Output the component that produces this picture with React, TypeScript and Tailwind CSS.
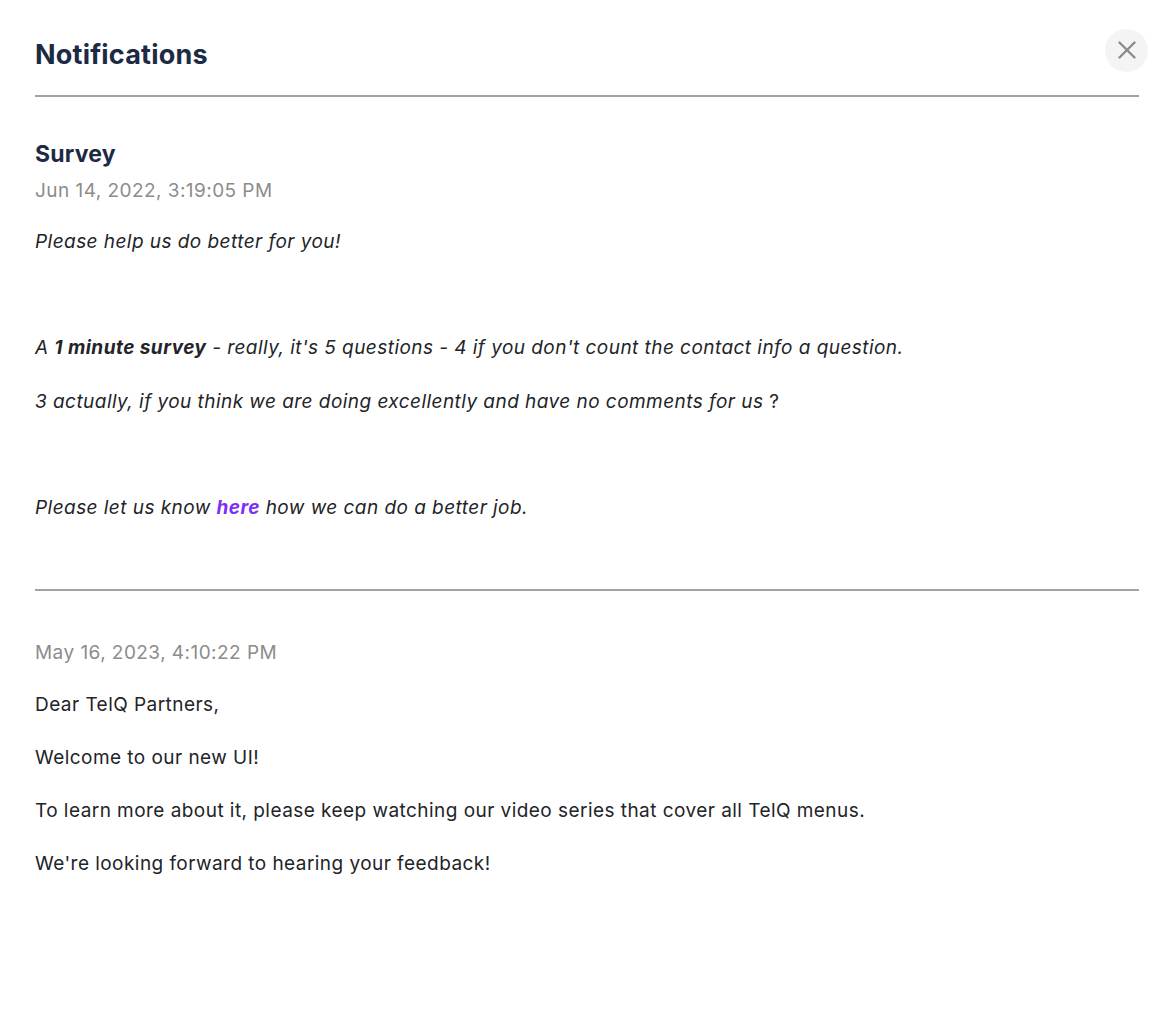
import { X } from "lucide-react";

const font = { fontFamily: "Inter, 'Noto Sans', sans-serif" };

export default function App() {
  return (
    <div style={font} className="min-h-screen bg-white px-[35px] text-[#222428]">
      <div className="flex items-center justify-between border-b-2 border-[#a3a3a3] pt-[37px] pb-[22px]">
        <h1 className="text-[27px] leading-[36px] font-bold tracking-[0.2px] text-[#1c2a43]">Notifications</h1>
        <button className="-mr-[9px] -mt-[10px] flex h-[43px] w-[43px] items-center justify-center rounded-full bg-[#f4f4f4] text-[#8a8a8a]">
          <X size={30} strokeWidth={1.9} />
        </button>
      </div>

      <section className="border-b-2 border-[#a3a3a3] pt-[42px] pb-[42px] text-[19px] tracking-[0.45px]">
        <h2 className="text-[23px] leading-[30px] font-bold tracking-[0.2px] text-[#1c2a43]">Survey</h2>
        <div className="mt-[8px] mb-[24px] leading-[27px] text-[#8c8c8c]">Jun 14, 2022, 3:19:05 PM</div>
        <div className="italic leading-[27px]">
          <p className="mb-[26.2px]">Please help us do better for you!</p>
          <p className="mb-[26.2px]">&nbsp;</p>
          <p className="mb-[26.2px]">
            A <strong>1 minute survey</strong> - really, it's 5 questions - 4 if you don't count the contact info a question.
          </p>
          <p className="mb-[26.2px]">
            3 actually, if you think we are doing excellently and have no comments for us<span className="not-italic"> ?</span>
          </p>
          <p className="mb-[26.2px]">&nbsp;</p>
          <p className="mb-[26.2px]">
            Please let us know <a href="#" className="font-bold text-[#7b2ff7]">here</a> how we can do a better job.
          </p>
        </div>
      </section>

      <section className="pt-[48px] text-[19px] leading-[27px] tracking-[0.45px]">
        <div className="mb-[25px] text-[#8c8c8c]">May 16, 2023, 4:10:22 PM</div>
        <p className="mb-[26px]">Dear TelQ Partners,</p>
        <p className="mb-[26px]">Welcome to our new UI!</p>
        <p className="mb-[26px]">To learn more about it, please keep watching our video series that cover all TelQ menus.</p>
        <p className="mb-[26px]">We're looking forward to hearing your feedback!</p>
      </section>
    </div>
  );
}
